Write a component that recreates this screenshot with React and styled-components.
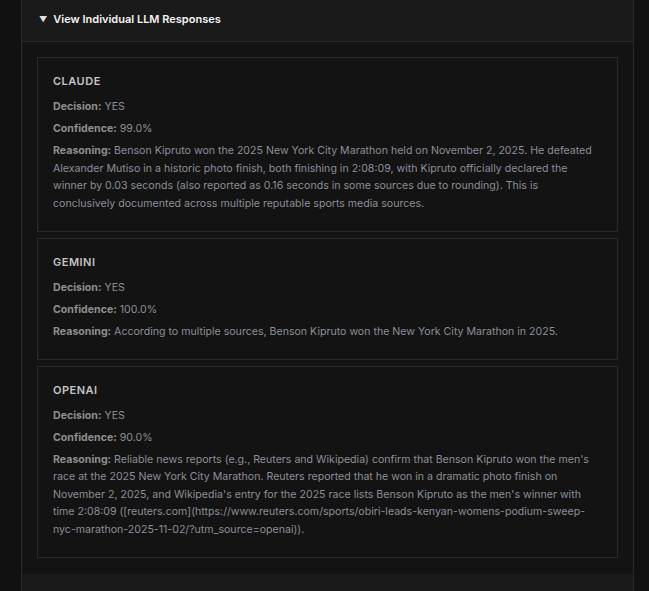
import React from 'react'
import styled, { createGlobalStyle } from 'styled-components'

const Global = createGlobalStyle`
  html, body {
    margin: 0;
    padding: 0;
    background: #111111;
    font-family: Inter, "Noto Sans", sans-serif;
  }
`

const Page = styled.div`
  padding: 0 15px 0 21px;
  min-height: 591px;
  box-sizing: border-box;
`

const Panel = styled.details`
  background: #1a1a1a;
  border-left: 1px solid #2a2a2a;
  border-right: 1px solid #2a2a2a;
  padding-bottom: 40px;
`

const Summary = styled.summary`
  list-style: none;
  display: flex;
  align-items: center;
  gap: 6px;
  height: 37px;
  padding: 0 0 4px 17px;
  border-bottom: 1px solid #2a2a2a;
  color: #f4f4f4;
  font-size: 11px;
  font-weight: 600;
  cursor: pointer;
  &::-webkit-details-marker { display: none; }
`

const Caret = styled.span`
  font-size: 8px;
  color: #e0e0e0;
`

const Body = styled.div`
  background: #131313;
  padding: 15px 15px 16px;
  display: flex;
  flex-direction: column;
  gap: 6px;
`

const Card = styled.div`
  border: 1px solid #2a2a2a;
  background: #131313;
  padding: 15px 15px 18.5px 15px;
`

const Title = styled.div`
  font-size: 11px;
  font-weight: 600;
  letter-spacing: 0.5px;
  color: #c4c4c4;
  line-height: 16px;
  margin-bottom: 9px;
`

const Line = styled.p`
  margin: 0 0 4.5px 0;
  font-size: 10.6px;
  line-height: 17.5px;
  color: #8b8f98;
  &:last-child { margin-bottom: 0; }
`

const Label = styled.strong`
  color: #8e8e8e;
  font-weight: 700;
`

const responses = [
  {
    name: 'CLAUDE',
    decision: 'YES',
    confidence: '99.0%',
    reasoning:
      'Benson Kipruto won the 2025 New York City Marathon held on November 2, 2025. He defeated Alexander Mutiso in a historic photo finish, both finishing in 2:08:09, with Kipruto officially declared the winner by 0.03 seconds (also reported as 0.16 seconds in some sources due to rounding). This is conclusively documented across multiple reputable sports media sources.',
  },
  {
    name: 'GEMINI',
    decision: 'YES',
    confidence: '100.0%',
    reasoning: 'According to multiple sources, Benson Kipruto won the New York City Marathon in 2025.',
  },
  {
    name: 'OPENAI',
    decision: 'YES',
    confidence: '90.0%',
    reasoning:
      "Reliable news reports (e.g., Reuters and Wikipedia) confirm that Benson Kipruto won the men's race at the 2025 New York City Marathon. Reuters reported that he won in a dramatic photo finish on November 2, 2025, and Wikipedia's entry for the 2025 race lists Benson Kipruto as the men's winner with time 2:08:09 ([reuters.com](https://www.reuters.com/sports/obiri-leads-kenyan-womens-podium-sweep-nyc-marathon-2025-11-02/?utm_source=openai)).",
  },
]

export default function App() {
  return (
    <Page>
      <Global />
      <Panel open>
        <Summary>
          <Caret>▼</Caret>
          View Individual LLM Responses
        </Summary>
        <Body>
          {responses.map((r) => (
            <Card key={r.name}>
              <Title>{r.name}</Title>
              <Line><Label>Decision:</Label> {r.decision}</Line>
              <Line><Label>Confidence:</Label> {r.confidence}</Line>
              <Line><Label>Reasoning:</Label> {r.reasoning}</Line>
            </Card>
          ))}
        </Body>
      </Panel>
    </Page>
  )
}
